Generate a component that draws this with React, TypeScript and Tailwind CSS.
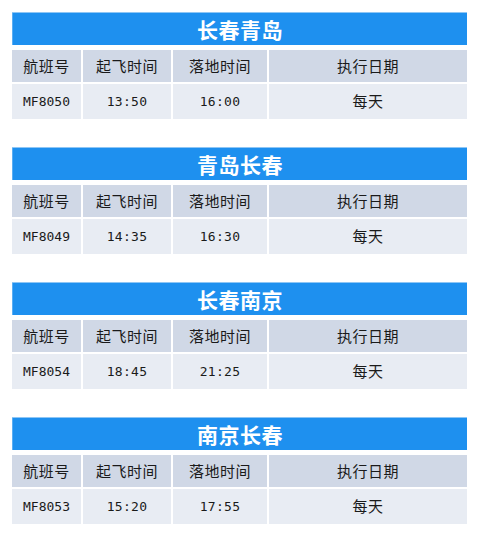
import React from 'react';

const flights = [
  { route: '长春青岛', no: 'MF8050', dep: '13:50', arr: '16:00', days: '每天' },
  { route: '青岛长春', no: 'MF8049', dep: '14:35', arr: '16:30', days: '每天' },
  { route: '长春南京', no: 'MF8054', dep: '18:45', arr: '21:25', days: '每天' },
  { route: '南京长春', no: 'MF8053', dep: '15:20', arr: '17:55', days: '每天' },
];

const cjk = "font-['Noto_Sans_CJK_SC',sans-serif]";
const mono = "font-['DejaVu_Sans_Mono','Noto_Sans_CJK_SC',monospace]";

const FlightTable = ({ f }: { f: (typeof flights)[number] }) => (
  <div className="w-[455px]">
    <div className="h-px bg-[#8ec6f5]" />
    <div className={`h-[32px] bg-[#1e90ef] border-l border-[#5aaef3] flex items-center justify-center pt-[2px] text-white text-[21px] font-bold tracking-[0.5px] ${cjk}`}>
      {f.route}
    </div>
    <div className="grid grid-cols-[69px_88px_94px_1fr] gap-[2px] mt-[5px] text-[#1a1a1a]">
      {['航班号', '起飞时间', '落地时间', '执行日期'].map((h) => (
        <div key={h} className={`h-[32px] bg-[#d0d8e6] flex items-center justify-center text-[15px] tracking-[0.5px] ${cjk}`}>
          {h}
        </div>
      ))}
      <div className={`h-[35px] bg-[#e8ecf3] flex items-center justify-center text-[13px] ${mono}`}>{f.no}</div>
      <div className={`h-[35px] bg-[#e8ecf3] flex items-center justify-center text-[13px] tracking-[0.3px] ${mono}`}>{f.dep}</div>
      <div className={`h-[35px] bg-[#e8ecf3] flex items-center justify-center text-[13px] tracking-[0.3px] ${mono}`}>{f.arr}</div>
      <div className={`h-[35px] bg-[#e8ecf3] flex items-center justify-center text-[15px] tracking-[0.5px] ${cjk}`}>{f.days}</div>
    </div>
  </div>
);

export default function App() {
  return (
    <div className="w-[479px] h-[537px] bg-white pl-[12px] pt-[12px] flex flex-col gap-[28px]">
      {flights.map((f) => (
        <FlightTable key={f.no} f={f} />
      ))}
    </div>
  );
}
